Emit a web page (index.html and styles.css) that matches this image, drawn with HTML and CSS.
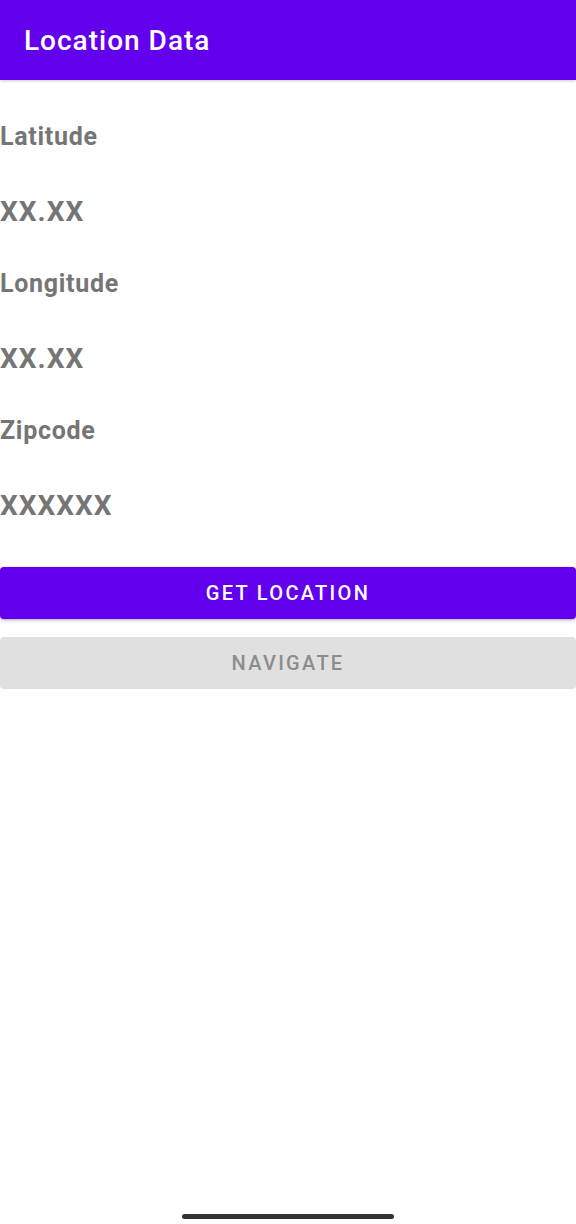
FILE: index.html
```html
<!DOCTYPE html>
<html lang="en">
<head>
<meta charset="utf-8">
<title>Location Data</title>
<link rel="stylesheet" href="styles.css">
</head>
<body>
  <header class="app-bar">
    <h1 class="app-title">Location Data</h1>
  </header>
  <main class="content">
    <section class="fields">
      <div class="field">
        <div class="field-label">Latitude</div>
        <div class="field-value">XX.XX</div>
      </div>
      <div class="field">
        <div class="field-label">Longitude</div>
        <div class="field-value">XX.XX</div>
      </div>
      <div class="field">
        <div class="field-label">Zipcode</div>
        <div class="field-value">XXXXXX</div>
      </div>
    </section>
    <div class="actions">
      <button class="btn btn-primary" type="button">Get Location</button>
      <button class="btn btn-disabled" type="button" disabled>Navigate</button>
    </div>
  </main>
  <div class="home-indicator"></div>
</body>
</html>
```

FILE: styles.css
```css
html, body {
  margin: 0;
  padding: 0;
}
body {
  font-family: Roboto, "Noto Sans", "Liberation Sans", sans-serif;
  background: #ffffff;
  height: 100vh;
  display: flex;
  flex-direction: column;
  box-sizing: border-box;
  overflow: hidden;
}
.app-bar {
  height: 80px;
  flex: none;
  background: #6200ee;
  display: flex;
  align-items: center;
  padding-left: 24px;
  padding-top: 2px;
  box-sizing: border-box;
  box-shadow: 0 1px 3px rgba(0, 0, 0, 0.2);
}
.app-title {
  margin: 0;
  color: #ffffff;
  font-size: 28px;
  font-weight: 500;
  letter-spacing: 1px;
  line-height: 32px;
}
.content {
  flex: 1;
  display: flex;
  flex-direction: column;
}
.fields {
  display: flex;
  flex-direction: column;
  gap: 40px;
  padding-top: 41px;
}
.field {
  display: flex;
  flex-direction: column;
  gap: 43px;
}
.field-label {
  font-size: 25px;
  font-weight: 700;
  letter-spacing: 0.7px;
  line-height: 32px;
  color: #757575;
}
.field-value {
  font-size: 28px;
  font-weight: 700;
  letter-spacing: 1px;
  line-height: 32px;
  color: #757575;
}
.actions {
  display: flex;
  flex-direction: column;
  gap: 18px;
  margin-top: 45px;
}
.btn {
  height: 52px;
  border: none;
  border-radius: 4px;
  font-family: Roboto, "Noto Sans", "Liberation Sans", sans-serif;
  font-size: 20px;
  font-weight: 500;
  letter-spacing: 2.3px;
  text-transform: uppercase;
  width: 100%;
  padding: 0;
}
.btn-primary {
  background: #6200ee;
  color: #ffffff;
  box-shadow: 0 2px 3px rgba(0, 0, 0, 0.18), 0 0 2px rgba(98, 0, 238, 0.35);
}
.btn-disabled {
  background: #e0e0e0;
  color: #8c8c8c;
}
.home-indicator {
  flex: none;
  align-self: center;
  width: 212px;
  height: 5px;
  border-radius: 3px;
  background: #333333;
  margin-bottom: 5px;
}
```
